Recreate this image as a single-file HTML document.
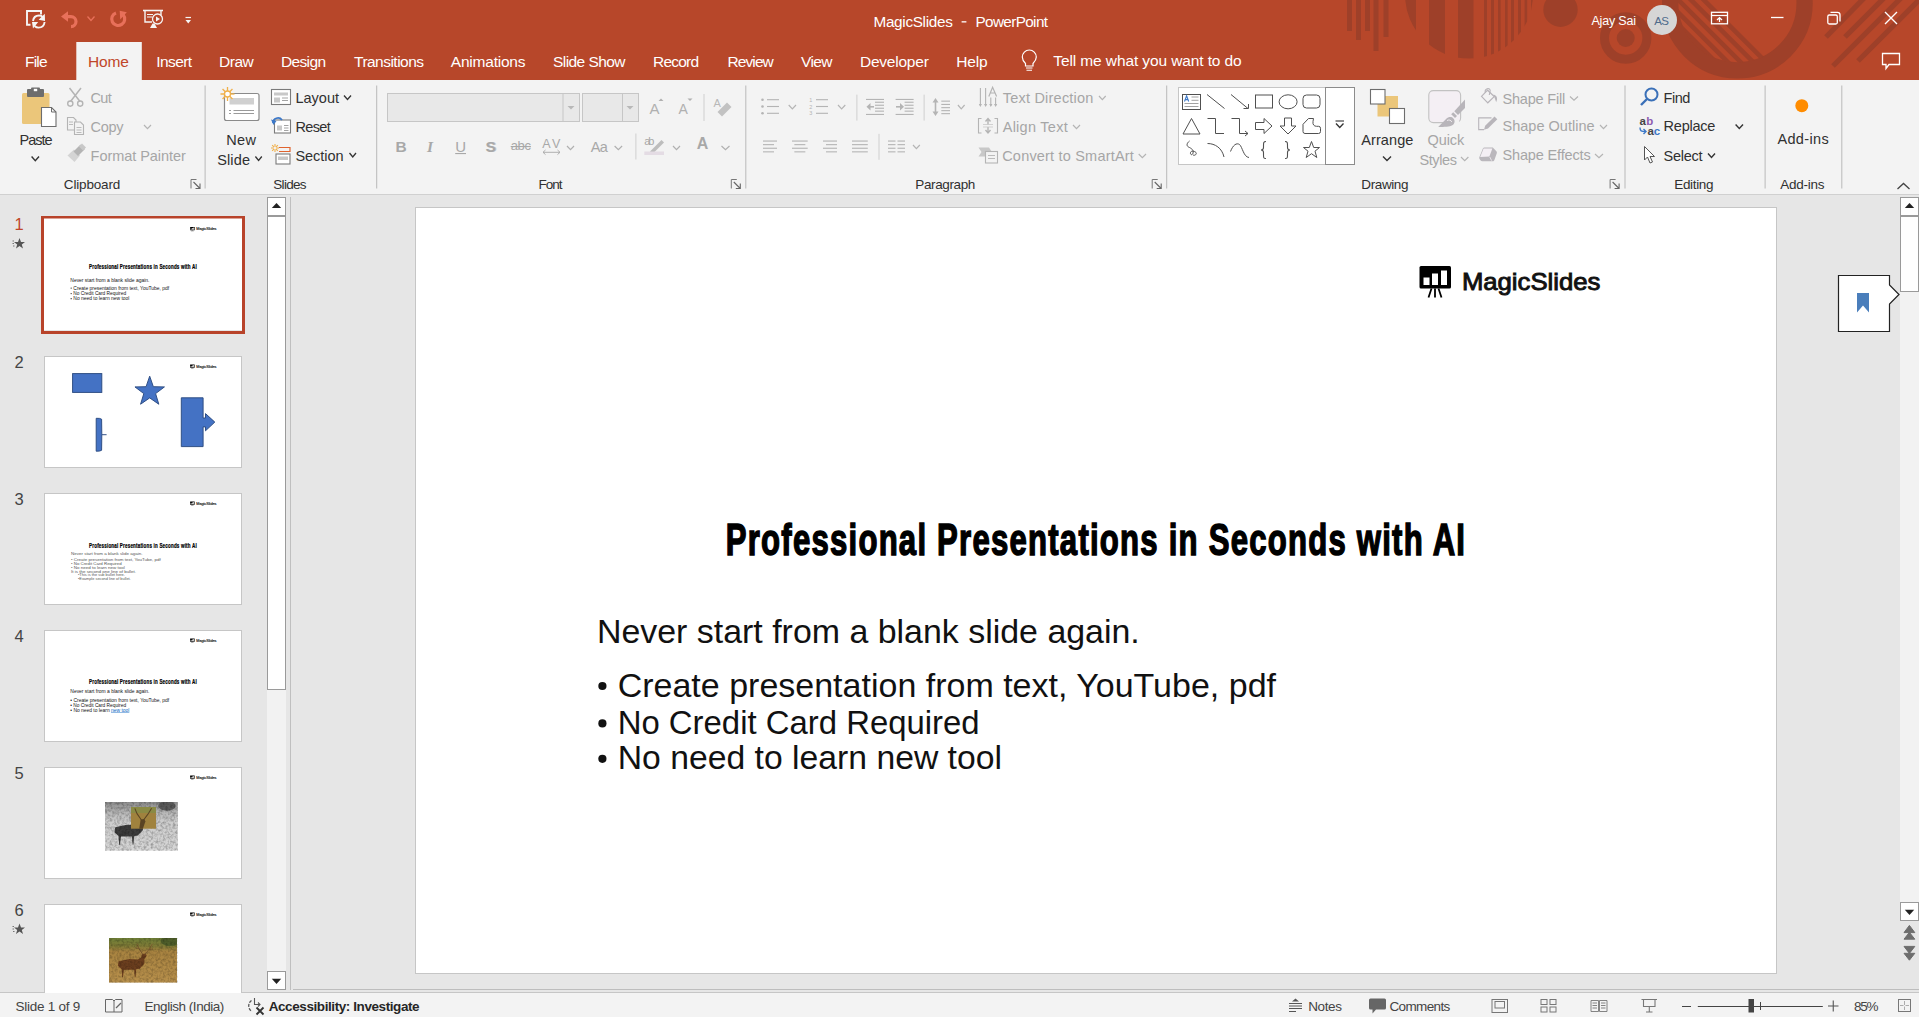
<!DOCTYPE html>
<html><head><meta charset="utf-8"><title>MagicSlides - PowerPoint</title>
<style>html,body{margin:0;padding:0;width:1919px;height:1017px;overflow:hidden;background:#E6E6E6;font-family:"Liberation Sans",sans-serif}svg{display:block}</style>
</head><body><svg width="1919" height="1017" viewBox="0 0 1919 1017" font-family="'Liberation Sans', sans-serif"><rect x="0" y="0" width="1919" height="80" fill="#B7472A"/>
<rect x="1347" y="0" width="5" height="31" fill="#9E4029"/>
<rect x="1356" y="0" width="5" height="40" fill="#9E4029"/>
<rect x="1365" y="0" width="5" height="31" fill="#9E4029"/>
<rect x="1373.5" y="0" width="5" height="51" fill="#9E4029"/>
<rect x="1383.5" y="0" width="5" height="37" fill="#9E4029"/>
<clipPath id="c1"><circle cx="1469" cy="-5.5" r="64"/></clipPath>
<g clip-path="url(#c1)" fill="#9E4029">
<rect x="1400" y="0" width="16" height="80" fill="#9E4029"/>
<rect x="1429" y="0" width="16" height="80" fill="#9E4029"/>
<rect x="1458" y="0" width="15.5" height="80" fill="#9E4029"/>
<rect x="1484" y="0" width="3" height="80" fill="#9E4029"/>
<rect x="1491" y="0" width="3" height="80" fill="#9E4029"/>
<rect x="1498" y="0" width="2.6" height="80" fill="#9E4029"/>
<rect x="1505" y="0" width="2.6" height="80" fill="#9E4029"/>
<rect x="1511" y="0" width="3" height="80" fill="#9E4029"/>
<rect x="1518" y="0" width="3" height="80" fill="#9E4029"/>
<rect x="1524.6" y="0" width="2.6" height="80" fill="#9E4029"/>
<rect x="1531" y="0" width="2.6" height="80" fill="#9E4029"/>
</g>
<circle cx="1560.5" cy="9.7" r="17.2" fill="#9E4029"/>
<circle cx="1625.7" cy="38" r="21.2" fill="none" stroke="#9E4029" stroke-width="9"/>
<circle cx="1625.7" cy="38" r="9" fill="#9E4029"/>
<circle cx="1737.4" cy="3.1" r="67.2" fill="none" stroke="#9E4029" stroke-width="16.3"/>
<clipPath id="c2"><circle cx="1737.4" cy="3.1" r="59.5"/></clipPath>
<g clip-path="url(#c2)" stroke="#9E4029" stroke-width="4.6">
<line x1="1597.1" y1="-56.6" x2="1797.1" y2="143.4"/>
<line x1="1603.1" y1="-62.6" x2="1803.1" y2="137.4"/>
<line x1="1609.5" y1="-69.0" x2="1809.5" y2="131.0"/>
<line x1="1615.8" y1="-75.3" x2="1815.8" y2="124.7"/>
<line x1="1622.2" y1="-81.7" x2="1822.2" y2="118.3"/>
</g>
<g stroke="#9E4029" stroke-width="5.2">
<line x1="1826" y1="37" x2="1872" y2="-10"/>
<line x1="1845" y1="37" x2="1892" y2="-10"/>
<line x1="1833" y1="66" x2="1909" y2="-10"/>
<line x1="1858" y1="61" x2="1929" y2="-10"/>
</g>
<path d="M41 14.5V11H27V24.8H30.5" fill="none" stroke="#F5F5F5" stroke-width="1.9"/>
<path d="M33 21C33.5 17.5 36 15.5 39 15.5C40.6 15.5 42 16.1 43 17.2" fill="none" stroke="#F5F5F5" stroke-width="1.9"/>
<path d="M44.8 13.8L45 21L38.6 19.8Z" fill="#F5F5F5"/>
<path d="M44.6 22C44.2 25.6 41.7 27.6 38.6 27.6C37 27.6 35.6 27 34.6 26" fill="none" stroke="#F5F5F5" stroke-width="1.9"/>
<path d="M32 22H38.2L33 28.6Z" fill="#F5F5F5"/>
<path d="M66.5 16.6H71A5 5 0 0 1 71 26.6H71.8" fill="none" stroke="#E8705A" stroke-width="3.2"/>
<path d="M61 16.5L68 11.3V21.7Z" fill="#E8705A"/>
<path d="M87.5 16.5L91.0 20.5L94.5 16.5" fill="none" stroke="#E8705A" stroke-width="1.3"/>
<path d="M115.98 12.89A6.5 6.5 0 1 0 123.18 14.82" fill="none" stroke="#E8705A" stroke-width="3.2"/>
<path d="M119.7 10.8L126.8 12.2L120.2 19.4Z" fill="#E8705A"/>
<path d="M143 10.5H163" fill="none" stroke="#F5F5F5" stroke-width="1.6"/>
<path d="M145 11V22H152M161 11V15" fill="none" stroke="#F5F5F5" stroke-width="1.4"/>
<path d="M147 14.5H153M147 17H152" fill="none" stroke="#F5F5F5" stroke-width="1.1"/>
<circle cx="157.5" cy="19" r="5" fill="none" stroke="#F5F5F5" stroke-width="1.3"/>
<path d="M156 16.5L160 19L156 21.5Z" fill="#F5F5F5"/>
<path d="M150 28L152.5 23.5H154.5L157 28Z" fill="#F5F5F5"/>
<path d="M185.5 17.5H191" fill="none" stroke="#F5F5F5" stroke-width="1.2"/>
<path d="M185.5 20H191L188.25 23.5Z" fill="#F5F5F5"/>
<text x="873.5" y="26.9" font-size="15.3" fill="#FFFFFF" textLength="79.3" lengthAdjust="spacing">MagicSlides</text>
<rect x="961.6" y="21.2" width="4.8" height="1.3" fill="#FFFFFF"/>
<text x="975.5" y="26.9" font-size="15.3" fill="#FFFFFF" textLength="72.5" lengthAdjust="spacing">PowerPoint</text>
<text x="1591.4" y="24.9" font-size="12.5" fill="#FFFFFF" textLength="44.6" lengthAdjust="spacing">Ajay Sai</text>
<circle cx="1662" cy="20" r="15" fill="#D6D6D6"/>
<text x="1654.3" y="24.9" font-size="11.5" fill="#4E6A8A" textLength="14.6" lengthAdjust="spacing">AS</text>
<rect x="1711.5" y="12.3" width="16" height="11.5" fill="none" stroke="#FFFFFF" stroke-width="1.3"/>
<path d="M1711.5 15.5H1727.5" fill="none" stroke="#fff" stroke-width="1.2"/>
<path d="M1719.5 22V17.5M1717 20L1719.5 17.5L1722 20" fill="none" stroke="#fff" stroke-width="1.2"/>
<path d="M1771 17.5H1783.5" fill="none" stroke="#fff" stroke-width="1.3"/>
<rect x="1827.8" y="15" width="9.5" height="9" fill="none" stroke="#FFFFFF" stroke-width="1.3" rx="1.5"/>
<path d="M1830.5 12.3H1837.5A2.5 2.5 0 0 1 1840 14.8V21.5" fill="none" stroke="#fff" stroke-width="1.3"/>
<path d="M1885 12L1897 24M1897 12L1885 24" fill="none" stroke="#fff" stroke-width="1.4"/>
<path d="M1882.5 53.5H1899.5V64.5H1889L1886 68.5V64.5H1882.5Z" fill="none" stroke="#fff" stroke-width="1.3"/>
<rect x="76.3" y="42" width="65.5" height="38" fill="#F3F3F3"/>
<text x="25" y="66.8" font-size="15.5" fill="#FFFFFF" textLength="22.5" lengthAdjust="spacing">File</text>
<text x="156.3" y="66.8" font-size="15.5" fill="#FFFFFF" textLength="35.7" lengthAdjust="spacing">Insert</text>
<text x="219" y="66.8" font-size="15.5" fill="#FFFFFF" textLength="34.8" lengthAdjust="spacing">Draw</text>
<text x="281" y="66.8" font-size="15.5" fill="#FFFFFF" textLength="45" lengthAdjust="spacing">Design</text>
<text x="354" y="66.8" font-size="15.5" fill="#FFFFFF" textLength="70" lengthAdjust="spacing">Transitions</text>
<text x="450.8" y="66.8" font-size="15.5" fill="#FFFFFF" textLength="74.7" lengthAdjust="spacing">Animations</text>
<text x="553" y="66.8" font-size="15.5" fill="#FFFFFF" textLength="72.5" lengthAdjust="spacing">Slide Show</text>
<text x="653" y="66.8" font-size="15.5" fill="#FFFFFF" textLength="46" lengthAdjust="spacing">Record</text>
<text x="727.5" y="66.8" font-size="15.5" fill="#FFFFFF" textLength="46.3" lengthAdjust="spacing">Review</text>
<text x="801" y="66.8" font-size="15.5" fill="#FFFFFF" textLength="31.5" lengthAdjust="spacing">View</text>
<text x="860" y="66.8" font-size="15.5" fill="#FFFFFF" textLength="68.8" lengthAdjust="spacing">Developer</text>
<text x="956.3" y="66.8" font-size="15.5" fill="#FFFFFF" textLength="31.2" lengthAdjust="spacing">Help</text>
<text x="88" y="66.8" font-size="15.5" fill="#C0462A" textLength="40.8" lengthAdjust="spacing">Home</text>
<path d="M1025.5 63.5C1023.5 61.5 1022.3 59.5 1022.3 57A7 7 0 0 1 1036.3 57C1036.3 59.5 1035 61.5 1033 63.5V66H1025.5Z" fill="none" stroke="#fff" stroke-width="1.2"/>
<path d="M1026 68H1032.5M1026.5 70.3H1032" fill="none" stroke="#fff" stroke-width="1.1"/>
<text x="1053.3" y="66.3" font-size="15.5" fill="#FFFFFF" textLength="188.4" lengthAdjust="spacing">Tell me what you want to do</text>
<rect x="0" y="80" width="1919" height="114" fill="#F3F3F3"/>
<rect x="0" y="194" width="1919" height="1" fill="#D0D0D0"/>
<rect x="204.6" y="85.5" width="1" height="103" fill="#B9B9B9"/>
<rect x="376.2" y="85.5" width="1" height="103" fill="#B9B9B9"/>
<rect x="745.3" y="85.5" width="1" height="103" fill="#B9B9B9"/>
<rect x="1166.2" y="85.5" width="1" height="103" fill="#B9B9B9"/>
<rect x="1624.5" y="85.5" width="1" height="103" fill="#B9B9B9"/>
<rect x="1764.6" y="85.5" width="1" height="103" fill="#B9B9B9"/>
<rect x="1841.3" y="85.5" width="1" height="103" fill="#B9B9B9"/>
<text x="63.8" y="188.9" font-size="13.5" fill="#303030" textLength="56.5" lengthAdjust="spacing">Clipboard</text>
<text x="273.3" y="188.9" font-size="13.5" fill="#303030" textLength="33.2" lengthAdjust="spacing">Slides</text>
<text x="538.4" y="188.9" font-size="13.5" fill="#303030" textLength="24.1" lengthAdjust="spacing">Font</text>
<text x="915.3" y="188.9" font-size="13.5" fill="#303030" textLength="60" lengthAdjust="spacing">Paragraph</text>
<text x="1361.3" y="188.9" font-size="13.5" fill="#303030" textLength="47.2" lengthAdjust="spacing">Drawing</text>
<text x="1674.2" y="188.9" font-size="13.5" fill="#303030" textLength="39.3" lengthAdjust="spacing">Editing</text>
<text x="1780.2" y="188.9" font-size="13.5" fill="#303030" textLength="44.2" lengthAdjust="spacing">Add-ins</text>
<path d="M191.0 188.5V179.5H196.5" fill="none" stroke="#777" stroke-width="1"/>
<path d="M193.5 182L199.5 188M200.0 183.5V188.5H195.5" fill="none" stroke="#666" stroke-width="1.1"/>
<path d="M731.3 188.5V179.5H736.8" fill="none" stroke="#777" stroke-width="1"/>
<path d="M733.8 182L739.8 188M740.3 183.5V188.5H735.8" fill="none" stroke="#666" stroke-width="1.1"/>
<path d="M1152.2 188.5V179.5H1157.7" fill="none" stroke="#777" stroke-width="1"/>
<path d="M1154.7 182L1160.7 188M1161.2 183.5V188.5H1156.7" fill="none" stroke="#666" stroke-width="1.1"/>
<path d="M1610.1 188.5V179.5H1615.6" fill="none" stroke="#777" stroke-width="1"/>
<path d="M1612.6 182L1618.6 188M1619.1 183.5V188.5H1614.6" fill="none" stroke="#666" stroke-width="1.1"/>
<path d="M1897.5 189L1903.5 183.5L1909.5 189" fill="none" stroke="#444" stroke-width="1.3"/>
<rect x="22" y="93" width="27.5" height="31" fill="#EBC67A" rx="1.5"/>
<rect x="27" y="89" width="17" height="8" fill="#6D6D6D" rx="1"/>
<rect x="31" y="87.5" width="9" height="4" fill="#6D6D6D" rx="1"/>
<rect x="33.8" y="88.8" width="3.4" height="2.4" fill="#FFFFFF"/>
<path d="M41.5 107.5H51.5L56 112V126.5H41.5Z" fill="#FFFFFF" stroke="#6D6D6D" stroke-width="1.1"/>
<path d="M51.5 107.5V112H56" fill="none" stroke="#6D6D6D" stroke-width="1"/>
<text x="19.5" y="144.7" font-size="14.5" fill="#303030" textLength="33.2" lengthAdjust="spacing">Paste</text>
<path d="M31.6 156.5L35.300000000000004 160.7L39.0 156.5" fill="none" stroke="#333" stroke-width="1.4"/>
<path d="M69.5 88L80 101.5M81 88L70.5 101.5" fill="none" stroke="#B4B4B4" stroke-width="1.5"/>
<circle cx="70.3" cy="103.6" r="2.6" fill="none" stroke="#B4B4B4" stroke-width="1.4"/>
<circle cx="80.2" cy="103.6" r="2.6" fill="none" stroke="#B4B4B4" stroke-width="1.4"/>
<text x="90.6" y="102.8" font-size="14.5" fill="#A6A6A6" textLength="21.1" lengthAdjust="spacing">Cut</text>
<path d="M67.5 117.5H73.5L76 120V130H67.5Z" fill="none" stroke="#B4B4B4" stroke-width="1.1"/>
<path d="M74.5 122H80.5L83.5 125V134.5H74.5Z" fill="#F3F3F3" stroke="#B4B4B4" stroke-width="1.1"/>
<path d="M69 122H73M69 124.5H73M76.5 127.5H81.5M76.5 130H81.5M76.5 132.5H81.5" fill="none" stroke="#B4B4B4" stroke-width="0.9"/>
<text x="90.6" y="132" font-size="14.5" fill="#A6A6A6" textLength="33" lengthAdjust="spacing">Copy</text>
<path d="M144 125L147.5 128.6L151 125" fill="none" stroke="#B4B4B4" stroke-width="1.2"/>
<path d="M67.5 155.5L74 149.5L80 155.5L74.5 162Z" fill="#D4D4D4"/>
<path d="M73.5 151.5L80.5 144.5L85 149L78 156Z" fill="#B4B4B4"/>
<path d="M79 146.5L82 143.5L86 147.5L83 150.5Z" fill="#C8C8C8"/>
<text x="90.6" y="160.7" font-size="14.5" fill="#A6A6A6" textLength="95.2" lengthAdjust="spacing">Format Painter</text>
<rect x="224.5" y="93.5" width="34.5" height="27" fill="#FFFFFF" stroke="#8A8A8A" stroke-width="1.2" rx="2"/>
<rect x="229.5" y="98" width="24.5" height="6.5" fill="#D0D0D0"/>
<path d="M229 110.5H231M233.5 110.5H254M229 113.5H231M233.5 113.5H254" fill="none" stroke="#9A9A9A" stroke-width="1.1"/>
<g stroke="#F0B04A" stroke-width="1.3"><line x1="234.5" y1="94.0" x2="230.0" y2="94.0"/><line x1="232.44975075195458" y1="98.9497441846549" x2="229.26776812569807" y2="95.76776578023389"/><line x1="227.50000928756427" y1="100.99999999999383" x2="227.50000331698723" y2="96.4999999999978"/><line x1="222.5502623826535" y1="98.94975731924555" x2="225.7322365652334" y2="95.76777047115912"/><line x1="220.50000000002464" y1="94.00001857512855" x2="225.0000000000088" y2="94.00000663397448"/><line x1="222.5502361134722" y1="89.0502689499706" x2="225.73222718338292" y2="92.23223891070378"/><line x1="227.49997213730717" y1="87.00000000005545" x2="227.49999004903827" y2="91.50000000001981"/><line x1="232.44972448270357" y1="89.05022954619865" x2="229.2677587438227" y2="92.23222483792809"/></g>
<circle cx="227.5" cy="94" r="3" fill="#FFFFFF" stroke="#F0B04A" stroke-width="1.3"/>
<text x="226.3" y="144.8" font-size="14.5" fill="#303030" textLength="29.7" lengthAdjust="spacing">New</text>
<text x="217.2" y="164.8" font-size="14.5" fill="#303030" textLength="32.8" lengthAdjust="spacing">Slide</text>
<path d="M255.4 156.5L258.6 160.5L261.8 156.5" fill="none" stroke="#333" stroke-width="1.3"/>
<rect x="271.5" y="89.5" width="19" height="15" fill="#FFFFFF" stroke="#7A7A7A" stroke-width="1.1"/>
<rect x="274" y="92.5" width="14" height="3" fill="#C8C8C8"/>
<rect x="274" y="97.5" width="6" height="5" fill="#C8C8C8"/>
<path d="M282 98H288M282 100.5H288" fill="none" stroke="#9A9A9A" stroke-width="0.9"/>
<text x="295.4" y="102.8" font-size="14.5" fill="#303030" textLength="43.6" lengthAdjust="spacing">Layout</text>
<path d="M344 95.5L347.5 99.5L351 95.5" fill="none" stroke="#333" stroke-width="1.3"/>
<rect x="274.5" y="120" width="16" height="13" fill="#FFFFFF" stroke="#7A7A7A" stroke-width="1.1"/>
<rect x="277" y="125.5" width="5" height="5" fill="#C8C8C8"/>
<path d="M284 125.5H288.5M284 128H288.5M284 130.5H288.5" fill="none" stroke="#9A9A9A" stroke-width="0.9"/>
<path d="M273 123A5 5 0 0 1 282 120" fill="none" stroke="#3C78C8" stroke-width="1.8"/>
<path d="M271 119.5L273.5 125L276.5 121Z" fill="#3C78C8"/>
<text x="295.4" y="131.9" font-size="14.5" fill="#303030" textLength="35.3" lengthAdjust="spacing">Reset</text>
<path d="M279 147.5H290V151.5H279" fill="none" stroke="#E0642F" stroke-width="1.2"/>
<rect x="276" y="154" width="14" height="10" fill="#FFFFFF" stroke="#7A7A7A" stroke-width="1.1"/>
<rect x="278" y="156.5" width="10" height="3.5" fill="#C8C8C8"/>
<g stroke="#F0B04A" stroke-width="1.1"><line x1="279.0" y1="148.0" x2="276.2" y2="148.0"/><line x1="277.8284290011169" y1="150.82842524837423" x2="275.84852870033507" y2="148.84852757451227"/><line x1="275.0000053071796" y1="151.99999999999648" x2="275.00000159215386" y2="149.19999999999894"/><line x1="272.17157850437343" y1="150.8284327538546" x2="274.15147355131205" y2="148.84852982615638"/><line x1="271.0000000000141" y1="148.00001061435918" x2="273.8000000000042" y2="148.00000318430776"/><line x1="272.1715634934127" y1="145.17158225712606" x2="274.1514690480238" y2="147.15147467713783"/><line x1="274.99998407846124" y1="144.0000000000317" x2="274.99999522353835" y2="146.8000000000095"/><line x1="277.8284139901163" y1="145.17155974068496" x2="275.8485241970349" y2="147.15146792220548"/></g>
<text x="295.4" y="160.8" font-size="14.5" fill="#303030" textLength="48.2" lengthAdjust="spacing">Section</text>
<path d="M349.5 153L352.75 157L356.0 153" fill="none" stroke="#333" stroke-width="1.3"/>
<rect x="387.5" y="93.5" width="192" height="28" fill="#E8E8E8" stroke="#C6C6C6" stroke-width="1"/>
<rect x="562.5" y="94" width="1" height="27" fill="#C6C6C6"/>
<path d="M567.5 106H574.5L571 109.5Z" fill="#B8B8B8"/>
<rect x="582.5" y="93.5" width="56" height="28" fill="#E8E8E8" stroke="#C6C6C6" stroke-width="1"/>
<rect x="622" y="94" width="1" height="27" fill="#C6C6C6"/>
<path d="M626.5 106H633.5L630 109.5Z" fill="#B8B8B8"/>
<text x="649.5" y="113.5" font-size="15" fill="#B0B0B0" textLength="11" lengthAdjust="spacing">A</text>
<path d="M658.5 101L661 98.5L663.5 101Z" fill="#B0B0B0"/>
<text x="678.5" y="113.5" font-size="14" fill="#B0B0B0" textLength="10" lengthAdjust="spacing">A</text>
<path d="M687.5 98.5L690 101L692.5 98.5Z" fill="#B0B0B0"/>
<rect x="703.5" y="94" width="1" height="27" fill="#D0D0D0"/>
<text x="713.5" y="107" font-size="11" fill="#B8B8B8" textLength="8" lengthAdjust="spacing">A</text>
<path d="M722 116.5L731.5 107L727 102.5L717.5 112Z" fill="#C2C2C2"/>
<text x="395.4" y="151.7" font-size="15.5" fill="#A8A8A8" font-weight="bold" textLength="10" lengthAdjust="spacing">B</text>
<text x="427" y="151.7" font-size="15.5" fill="#A8A8A8" font-weight="bold" font-family="'Liberation Serif', serif" font-style="italic">I</text>
<text x="455.2" y="151.7" font-size="15" fill="#A8A8A8" textLength="10.8" lengthAdjust="spacing">U</text>
<rect x="455.2" y="153" width="10.8" height="1.1" fill="#A8A8A8"/>
<text x="486.5" y="152.3" font-size="15.5" fill="#C8C8C8" font-weight="bold" textLength="10" lengthAdjust="spacing">S</text>
<text x="485.5" y="151.7" font-size="15.5" fill="#A8A8A8" font-weight="bold" textLength="10" lengthAdjust="spacing">S</text>
<text x="510.7" y="150" font-size="13" fill="#A8A8A8" textLength="20.2" lengthAdjust="spacing">abc</text>
<rect x="510.7" y="146" width="20.2" height="1.1" fill="#A8A8A8"/>
<text x="542.3" y="147.5" font-size="12.5" fill="#A8A8A8" textLength="18" lengthAdjust="spacing">AV</text>
<path d="M543 152.3H560M545.5 150L543 152.3L545.5 154.6M557.5 150L560 152.3L557.5 154.6" fill="none" stroke="#A8A8A8" stroke-width="0.9"/>
<path d="M567 146L570.5 149.6L574 146" fill="none" stroke="#B0B0B0" stroke-width="1.2"/>
<text x="590.8" y="151.5" font-size="14.5" fill="#A8A8A8" textLength="17" lengthAdjust="spacing">Aa</text>
<path d="M614.6 146L618.35 149.6L622.1 146" fill="none" stroke="#B0B0B0" stroke-width="1.2"/>
<rect x="635.4" y="133.5" width="1" height="26" fill="#D0D0D0"/>
<text x="644.3" y="145" font-size="11" fill="#A8A8A8" textLength="10" lengthAdjust="spacing">ab</text>
<path d="M650 151.5L661.5 140L664 142.5L652.5 154Z" fill="#BDBDBD"/>
<rect x="644.3" y="151.5" width="19.7" height="3.5" fill="#E4DCE4"/>
<path d="M673 146L676.5 149.6L680 146" fill="none" stroke="#B0B0B0" stroke-width="1.2"/>
<text x="696.8" y="149.3" font-size="16" fill="#A8A8A8" font-weight="bold" textLength="12" lengthAdjust="spacing">A</text>
<path d="M721.5 146L725.5 149.6L729.5 146" fill="none" stroke="#B0B0B0" stroke-width="1.2"/>
<circle cx="762.5" cy="99.7" r="1.3" fill="#B4B4B4"/>
<rect x="767.0" y="99.15" width="12" height="1.1" fill="#B4B4B4"/>
<circle cx="762.5" cy="106.5" r="1.3" fill="#B4B4B4"/>
<rect x="767.0" y="105.95" width="12" height="1.1" fill="#B4B4B4"/>
<circle cx="762.5" cy="113.3" r="1.3" fill="#B4B4B4"/>
<rect x="767.0" y="112.75" width="12" height="1.1" fill="#B4B4B4"/>
<path d="M788.7 105L792.35 108.8L796.0 105" fill="none" stroke="#B4B4B4" stroke-width="1.2"/>
<rect x="816" y="99.15" width="12" height="1.1" fill="#B4B4B4"/>
<rect x="816" y="105.95" width="12" height="1.1" fill="#B4B4B4"/>
<rect x="816" y="112.75" width="12" height="1.1" fill="#B4B4B4"/>
<text x="809.3" y="102" font-size="5.5" fill="#B4B4B4">1</text>
<text x="809.3" y="108.5" font-size="5.5" fill="#B4B4B4">2</text>
<text x="809.3" y="115" font-size="5.5" fill="#B4B4B4">3</text>
<path d="M838 105L841.65 108.8L845.3 105" fill="none" stroke="#B4B4B4" stroke-width="1.2"/>
<rect x="856.4" y="94.6" width="1" height="26" fill="#D0D0D0"/>
<rect x="866" y="98.9" width="18" height="1.1" fill="#B4B4B4"/>
<rect x="866" y="113.9" width="18" height="1.1" fill="#B4B4B4"/>
<rect x="875" y="101.7" width="9" height="1.1" fill="#B4B4B4"/>
<rect x="875" y="104.7" width="9" height="1.1" fill="#B4B4B4"/>
<rect x="875" y="107.7" width="9" height="1.1" fill="#B4B4B4"/>
<rect x="875" y="110.6" width="9" height="1.1" fill="#B4B4B4"/>
<rect x="895.6" y="98.9" width="18" height="1.1" fill="#B4B4B4"/>
<rect x="895.6" y="113.9" width="18" height="1.1" fill="#B4B4B4"/>
<rect x="904.6" y="101.7" width="9" height="1.1" fill="#B4B4B4"/>
<rect x="904.6" y="104.7" width="9" height="1.1" fill="#B4B4B4"/>
<rect x="904.6" y="107.7" width="9" height="1.1" fill="#B4B4B4"/>
<rect x="904.6" y="110.6" width="9" height="1.1" fill="#B4B4B4"/>
<path d="M866.5 106.8L870.5 103V110.6Z" fill="#B4B4B4"/>
<path d="M870 106.8H874" fill="none" stroke="#B4B4B4" stroke-width="1.6"/>
<path d="M904 106.8L900 103V110.6Z" fill="#B4B4B4"/>
<path d="M896 106.8H900.5" fill="none" stroke="#B4B4B4" stroke-width="1.6"/>
<rect x="923.6" y="94.6" width="1" height="26" fill="#D0D0D0"/>
<rect x="941.3" y="100.6" width="8.7" height="1.1" fill="#B4B4B4"/>
<rect x="941.3" y="103.9" width="8.7" height="1.1" fill="#B4B4B4"/>
<rect x="941.3" y="107.1" width="8.7" height="1.1" fill="#B4B4B4"/>
<rect x="941.3" y="110.1" width="8.7" height="1.1" fill="#B4B4B4"/>
<rect x="941.3" y="113.1" width="8.7" height="1.1" fill="#B4B4B4"/>
<path d="M935.5 100.5V113.5" fill="none" stroke="#B4B4B4" stroke-width="1.6"/>
<path d="M932.5 102.5L935.5 98L938.5 102.5ZM932.5 111.5L935.5 116L938.5 111.5Z" fill="#B4B4B4"/>
<path d="M957.9 105L961.25 108.8L964.6 105" fill="none" stroke="#B4B4B4" stroke-width="1.2"/>
<path d="M980.4 88V106M985.6 88V106M990.8 97.5V106M995.6 97.5V106" fill="none" stroke="#B4B4B4" stroke-width="1.1"/>
<path d="M978.8 104L980.4 107L982 104ZM984 104L985.6 107L987.2 104ZM989.2 104L990.8 107L992.4 104ZM994 104L995.6 107L997.2 104Z" fill="#B4B4B4"/>
<path d="M988.8 96.4L992.6 87.3L996.6 96.4M990.3 93H995" fill="none" stroke="#B4B4B4" stroke-width="1.2"/>
<text x="1002.7" y="102.9" font-size="14.5" fill="#A6A6A6" textLength="90.7" lengthAdjust="spacing">Text Direction</text>
<path d="M1099 96L1102.35 99.6L1105.7 96" fill="none" stroke="#B4B4B4" stroke-width="1.2"/>
<path d="M981.5 118.5H978.5V133H981.5M994.5 118.5H997.5V133H994.5" fill="none" stroke="#B4B4B4" stroke-width="1.1"/>
<path d="M988 119V124.5M985.5 121.5L988 118.5L990.5 121.5M988 127V132.5M985.5 130L988 133L990.5 130" fill="none" stroke="#B4B4B4" stroke-width="1.4"/>
<path d="M983 124.5H993M983 127H993" fill="none" stroke="#C8C8C8" stroke-width="0.8"/>
<text x="1002.7" y="132" font-size="14.5" fill="#A6A6A6" textLength="65" lengthAdjust="spacing">Align Text</text>
<path d="M1073 125L1076.5 128.6L1080 125" fill="none" stroke="#B4B4B4" stroke-width="1.2"/>
<path d="M978.5 147.5H989L992 152L989 156.5H978.5L981.5 152Z" fill="#C8C8C8"/>
<rect x="985.5" y="151.5" width="12" height="11.5" fill="#F3F3F3" stroke="#B4B4B4" stroke-width="1.1"/>
<path d="M988 155.5H995M988 158.5H995" fill="none" stroke="#B4B4B4" stroke-width="0.9"/>
<text x="1002.2" y="161.1" font-size="14.5" fill="#A6A6A6" textLength="131.6" lengthAdjust="spacing">Convert to SmartArt</text>
<path d="M1138.7 154L1142.3500000000001 157.6L1146.0 154" fill="none" stroke="#B4B4B4" stroke-width="1.2"/>
<rect x="763" y="140.5" width="14" height="1.1" fill="#B4B4B4"/>
<rect x="763" y="144.1" width="11" height="1.1" fill="#B4B4B4"/>
<rect x="763" y="147.7" width="14" height="1.1" fill="#B4B4B4"/>
<rect x="763" y="151.3" width="11" height="1.1" fill="#B4B4B4"/>
<rect x="792" y="140.5" width="15.7" height="1.1" fill="#B4B4B4"/>
<rect x="794.35" y="144.1" width="11" height="1.1" fill="#B4B4B4"/>
<rect x="792" y="147.7" width="15.7" height="1.1" fill="#B4B4B4"/>
<rect x="794.35" y="151.3" width="11" height="1.1" fill="#B4B4B4"/>
<rect x="823" y="140.5" width="14" height="1.1" fill="#B4B4B4"/>
<rect x="826" y="144.1" width="11" height="1.1" fill="#B4B4B4"/>
<rect x="823" y="147.7" width="14" height="1.1" fill="#B4B4B4"/>
<rect x="826" y="151.3" width="11" height="1.1" fill="#B4B4B4"/>
<rect x="852" y="140.5" width="15.8" height="1.1" fill="#B4B4B4"/>
<rect x="852" y="144.1" width="15.8" height="1.1" fill="#B4B4B4"/>
<rect x="852" y="147.7" width="15.8" height="1.1" fill="#B4B4B4"/>
<rect x="852" y="151.3" width="15.8" height="1.1" fill="#B4B4B4"/>
<rect x="878.5" y="133.8" width="1" height="26" fill="#D0D0D0"/>
<rect x="888" y="140.5" width="7.5" height="1.1" fill="#B4B4B4"/>
<rect x="888" y="144.1" width="7.5" height="1.1" fill="#B4B4B4"/>
<rect x="888" y="147.7" width="7.5" height="1.1" fill="#B4B4B4"/>
<rect x="888" y="151.3" width="7.5" height="1.1" fill="#B4B4B4"/>
<rect x="897.5" y="140.5" width="7.5" height="1.1" fill="#B4B4B4"/>
<rect x="897.5" y="144.1" width="7.5" height="1.1" fill="#B4B4B4"/>
<rect x="897.5" y="147.7" width="7.5" height="1.1" fill="#B4B4B4"/>
<rect x="897.5" y="151.3" width="7.5" height="1.1" fill="#B4B4B4"/>
<path d="M913 145L916.4 148.6L919.8 145" fill="none" stroke="#B4B4B4" stroke-width="1.2"/>
<rect x="1178.5" y="87.5" width="176" height="77" fill="#FFFFFF" stroke="#C6C6C6" stroke-width="1"/>
<rect x="1325.5" y="87.5" width="29" height="77" fill="none" stroke="#8C8C8C" stroke-width="1"/>
<path d="M1335.5 121H1344" fill="none" stroke="#333" stroke-width="1.1"/>
<path d="M1336 123.5L1339.75 127.5L1343.5 123.5" fill="none" stroke="#333" stroke-width="1.3"/>
<rect x="1182.5" y="94.5" width="18" height="15" fill="#FFFFFF" stroke="#505050" stroke-width="1"/>
<path d="M1184.5 101.5L1186.6 95.8L1188.7 101.5M1185.3 99.6H1187.9" fill="none" stroke="#3C78C8" stroke-width="1.1"/>
<path d="M1191.5 97H1198.5M1191.5 100.3H1198.5M1184.5 103.5H1198.5M1184.5 106.5H1198.5" fill="none" stroke="#8A8A8A" stroke-width="0.8"/>
<path d="M1207 94.5L1224.5 108.5" fill="none" stroke="#505050" stroke-width="1"/>
<path d="M1231 94.5L1248 108.5M1243.5 108.5H1248.5V104" fill="none" stroke="#505050" stroke-width="1"/>
<rect x="1255.5" y="95" width="17" height="13" fill="none" stroke="#505050" stroke-width="1"/>
<ellipse cx="1288.1" cy="101.8" rx="9" ry="7" fill="none" stroke="#505050" stroke-width="1"/>
<rect x="1303" y="95" width="17" height="13" fill="none" stroke="#505050" stroke-width="1" rx="3.5"/>
<path d="M1183 134H1200L1191.5 118.5Z" fill="none" stroke="#505050" stroke-width="1"/>
<path d="M1207.5 118.5H1215.5V133.5H1224" fill="none" stroke="#505050" stroke-width="1"/>
<path d="M1231.5 118.5H1239.5V133.5H1248M1245 131L1248 133.5L1245 136" fill="none" stroke="#505050" stroke-width="1"/>
<path d="M1255.5 122.5H1264V118.5L1272 126L1264 133.5V129.5H1255.5Z" fill="none" stroke="#505050" stroke-width="1"/>
<path d="M1284.5 118H1291.5V126H1296L1288 134L1280 126H1284.5Z" fill="none" stroke="#505050" stroke-width="1"/>
<path d="M1305 133.5H1318.5A2 2 0 0 0 1320.5 131.5V128.3A2 2 0 0 0 1318.5 126.3H1316.5C1314 126.3 1312.5 124.5 1313 121.5L1313.5 118.5H1308.5L1303 124.3V131.5A2 2 0 0 0 1305 133.5Z" fill="none" stroke="#505050" stroke-width="1"/>
<path d="M1189.5 141C1187 143 1186 145.5 1188.5 147C1191.5 148.5 1194 150 1193 153C1192.5 155.5 1190 155 1190.5 152.5C1191 150.5 1194.5 151 1196 152.5C1197 154 1195 156 1193 155" fill="none" stroke="#505050" stroke-width="1"/>
<path d="M1207.5 143.5C1215 143.5 1222 148 1224 157" fill="none" stroke="#505050" stroke-width="1"/>
<path d="M1230.5 151.5C1233 145 1236.5 142.5 1239.5 144.5C1242.5 147 1243.5 157 1249 157.5" fill="none" stroke="#505050" stroke-width="1"/>
<path d="M1266 141.5C1263.5 141.5 1263.5 143 1263.5 145.5V147.5C1263.5 149 1262.5 150 1261 150C1262.5 150 1263.5 151 1263.5 152.5V155C1263.5 157.5 1263.5 158.5 1266 158.5" fill="none" stroke="#505050" stroke-width="1.1"/>
<path d="M1285 141.5C1287.5 141.5 1287.5 143 1287.5 145.5V147.5C1287.5 149 1288.5 150 1290 150C1288.5 150 1287.5 151 1287.5 152.5V155C1287.5 157.5 1287.5 158.5 1285 158.5" fill="none" stroke="#505050" stroke-width="1.1"/>
<path d="M1311.5 141.5L1313.7 147.5H1319.5L1315 151.2L1316.8 157.5L1311.5 153.7L1306.2 157.5L1308 151.2L1303.5 147.5H1309.3Z" fill="none" stroke="#505050" stroke-width="1"/>
<rect x="1377.5" y="96" width="20.5" height="20.5" fill="#EBC67A"/>
<rect x="1370.5" y="89.5" width="14.5" height="14.5" fill="#FFFFFF" stroke="#6D6D6D" stroke-width="1.1"/>
<rect x="1389.5" y="108.5" width="15" height="15" fill="#FFFFFF" stroke="#6D6D6D" stroke-width="1.1"/>
<text x="1361.3" y="145" font-size="14.5" fill="#303030" textLength="52.1" lengthAdjust="spacing">Arrange</text>
<path d="M1383 156.5L1387.0 160.5L1391 156.5" fill="none" stroke="#333" stroke-width="1.4"/>
<rect x="1428.8" y="90.6" width="31.8" height="32" fill="#F4EFF4" stroke="#C2C2C2" stroke-width="1.1" rx="4.5"/>
<path d="M1456 119L1462 123.5L1438 128Z" fill="#F3F3F3"/>
<path d="M1465 99.5V108L1458 115L1454.3 111.3Z" fill="#B8B5BA"/>
<path d="M1453.2 112.3L1457 116.1L1455 118.1L1451.2 114.3Z" fill="#B8B5BA"/>
<path d="M1438.2 127L1446.3 118.7C1448.3 116.7 1451.6 116.4 1453.4 118.4C1455.4 120.6 1454.8 123.6 1452.3 125.3C1449.8 127 1444.5 127 1438.2 127Z" fill="#B8B5BA"/>
<path d="M1447 120.5C1449 119.5 1451 120 1451.8 122" fill="none" stroke="#F4EFF4" stroke-width="0.9"/>
<text x="1427.4" y="145" font-size="14.5" fill="#A6A6A6" textLength="36.9" lengthAdjust="spacing">Quick</text>
<text x="1419.4" y="164.8" font-size="14.5" fill="#A6A6A6" textLength="37.6" lengthAdjust="spacing">Styles</text>
<path d="M1461 157L1464.7 160.6L1468.4 157" fill="none" stroke="#B4B4B4" stroke-width="1.2"/>
<path d="M1481.5 96.3L1487.6 90.2L1494.2 96.6L1487.8 102.8Z" fill="none" stroke="#B8B5BA" stroke-width="1.2"/>
<path d="M1485.2 92.5C1484.5 88.5 1489.5 87.2 1490.2 90.5L1489.3 95" fill="none" stroke="#B8B5BA" stroke-width="1.1"/>
<path d="M1493.5 94.5C1496 95 1497.3 97 1497 99.5L1496.2 102.2L1494.6 97.8Z" fill="#B8B5BA"/>
<text x="1502.5" y="103.5" font-size="14.5" fill="#A6A6A6" textLength="62.8" lengthAdjust="spacing">Shape Fill</text>
<path d="M1570 96.5L1574.0 100.1L1578 96.5" fill="none" stroke="#B4B4B4" stroke-width="1.2"/>
<path d="M1484 129.6H1478.7V117.9H1491.5" fill="none" stroke="#B8B5BA" stroke-width="1.1"/>
<path d="M1484 129.8L1485.2 125.7L1494.5 116.4L1497.3 119.2L1488 128.5Z" fill="#B8B5BA"/>
<text x="1502.5" y="131.4" font-size="14.5" fill="#A6A6A6" textLength="92.1" lengthAdjust="spacing">Shape Outline</text>
<path d="M1600 125L1603.5 128.6L1607 125" fill="none" stroke="#B4B4B4" stroke-width="1.2"/>
<path d="M1479.2 157.5L1483 148.2C1483.3 147.6 1483.8 147.4 1484.3 147.4H1492.8L1496.6 151.6C1497 152.2 1497 152.8 1496.8 153.3L1494.4 160C1494.1 160.8 1493.5 161.3 1492.7 161.3H1482.3C1481.6 161.3 1481 161 1480.6 160.5L1479.4 158.8Z" fill="#BAB7BC"/>
<path d="M1480.2 157L1483.6 148.4H1492.4L1489.4 156.6Z" fill="#F4EFF4"/>
<path d="M1489.8 157L1491.6 160.6" fill="none" stroke="#F4EFF4" stroke-width="0.8"/>
<text x="1502.5" y="160.4" font-size="14.5" fill="#A6A6A6" textLength="88.2" lengthAdjust="spacing">Shape Effects</text>
<path d="M1595 154L1599.0 157.6L1603 154" fill="none" stroke="#B4B4B4" stroke-width="1.2"/>
<circle cx="1651.5" cy="94.5" r="6" fill="none" stroke="#3A70B8" stroke-width="2"/>
<path d="M1647 99L1641 105" fill="none" stroke="#3A70B8" stroke-width="2.4"/>
<text x="1663.6" y="103" font-size="14.5" fill="#303030" textLength="26.8" lengthAdjust="spacing">Find</text>
<text x="1639.5" y="124.5" font-size="11.5" fill="#444" font-weight="bold">a</text>
<rect x="1652.3" y="116" width="0" height="0" fill="none"/>
<text x="1646.2" y="124.5" font-size="11.5" fill="#8E5CB0" font-weight="bold">b</text>
<text x="1647.5" y="135" font-size="11.5" fill="#444" font-weight="bold">a</text>
<text x="1653.8" y="135" font-size="11.5" fill="#3C78C8" font-weight="bold">c</text>
<path d="M1640 127.5C1640 131 1641 131.5 1646 131.5M1643.5 129L1646 131.5L1643.5 134" fill="none" stroke="#3C78C8" stroke-width="1.4"/>
<text x="1663.6" y="131.4" font-size="14.5" fill="#303030" textLength="51.8" lengthAdjust="spacing">Replace</text>
<path d="M1735.6 124.5L1739.3 128.5L1743.0 124.5" fill="none" stroke="#333" stroke-width="1.4"/>
<path d="M1644.5 146.5V160L1647.5 157L1650 163L1652.5 162L1650 156.5H1654.5Z" fill="#FFFFFF" stroke="#555" stroke-width="1"/>
<text x="1663.6" y="160.7" font-size="14.5" fill="#303030" textLength="39" lengthAdjust="spacing">Select</text>
<path d="M1708 153.5L1711.5 157.5L1715 153.5" fill="none" stroke="#333" stroke-width="1.4"/>
<circle cx="1801.8" cy="105.7" r="6.5" fill="#FF8C00"/>
<text x="1777.4" y="144.2" font-size="14.5" fill="#303030" textLength="51.4" lengthAdjust="spacing">Add-ins</text>
<rect x="0" y="195" width="1919" height="797" fill="#E6E6E6"/>
<rect x="267" y="197" width="19" height="793" fill="#F2F2F2"/>
<rect x="267.5" y="197.5" width="18" height="18" fill="#FFFFFF" stroke="#9A9A9A" stroke-width="1"/>
<path d="M271.8 208H281.2L276.5 203Z" fill="#222"/>
<rect x="267.5" y="216.5" width="18" height="473" fill="#FFFFFF" stroke="#9A9A9A" stroke-width="1"/>
<rect x="267.5" y="971.5" width="18" height="18" fill="#FFFFFF" stroke="#9A9A9A" stroke-width="1"/>
<path d="M271.8 978.8H281.2L276.5 984Z" fill="#222"/>
<rect x="290" y="197" width="1" height="793" fill="#BFBFBF"/>
<rect x="1900" y="197" width="19" height="792" fill="#F2F2F2"/>
<rect x="1900.5" y="197.5" width="18" height="18" fill="#FFFFFF" stroke="#9A9A9A" stroke-width="1"/>
<path d="M1904.8 208H1914.2L1909.5 203Z" fill="#222"/>
<rect x="1900.5" y="216.5" width="18" height="75" fill="#FFFFFF" stroke="#9A9A9A" stroke-width="1"/>
<rect x="1900.5" y="902.5" width="18" height="18" fill="#FFFFFF" stroke="#9A9A9A" stroke-width="1"/>
<path d="M1904.8 909.8H1914.2L1909.5 915Z" fill="#222"/>
<rect x="1900" y="921" width="19" height="68" fill="#E6E6E6"/>
<path d="M1909.4 925.4L1914.8 932.6H1904Z M1909.4 932.3L1914.8 939.2H1904Z" fill="#6D6D6D" stroke="#6D6D6D" stroke-width="1" stroke-linejoin="round"/>
<path d="M1904 946.4H1914.8L1909.4 953.4Z M1904 953.3H1914.8L1909.4 960.2Z" fill="#6D6D6D" stroke="#6D6D6D" stroke-width="1" stroke-linejoin="round"/>
<rect x="293" y="989" width="1626" height="1" fill="#BDBDBD"/>
<rect x="0" y="992" width="1919" height="1" fill="#C6C6C6"/>
<rect x="415.5" y="207.5" width="1361" height="766" fill="#FFFFFF" stroke="#C6C6C6" stroke-width="1"/>
<g><rect x="1419.5" y="266" width="31.5" height="22.5" rx="1.5" fill="#000"/><rect x="1423.5" y="277.5" width="6" height="7.5" fill="#fff"/><rect x="1432" y="273.5" width="6" height="11.5" fill="#fff"/><rect x="1441" y="270.5" width="6" height="14.5" fill="#fff"/><path d="M1431.5 288.5L1428.5 297.5M1435 288.5V297.5M1438.5 288.5L1441.5 297.5" stroke="#000" stroke-width="1.8" fill="none"/><text x="1461.9" y="290.1" font-size="24" fill="#111" stroke="#111" stroke-width="0.9" textLength="138.5" lengthAdjust="spacingAndGlyphs">MagicSlides</text><text transform="scale(0.7,1)" x="1036.86" y="555.4" font-size="44.5" font-weight="bold" fill="#000" stroke="#000" stroke-width="1.5" textLength="1056.00" lengthAdjust="spacing">Professional Presentations in Seconds with AI</text><text x="596.9" y="642.9" font-size="33.5" fill="#111" textLength="542.9" lengthAdjust="spacingAndGlyphs">Never start from a blank slide again.</text><text x="617.7" y="696.6" font-size="33.5" fill="#111" textLength="658.3" lengthAdjust="spacingAndGlyphs">Create presentation from text, YouTube, pdf</text><text x="617.7" y="734" font-size="33.5" fill="#111" textLength="361.9" lengthAdjust="spacingAndGlyphs">No Credit Card Required</text><text x="617.7" y="769.4" font-size="33.5" fill="#111" textLength="384.3" lengthAdjust="spacingAndGlyphs">No need to learn new tool</text><circle cx="602.4" cy="686.0" r="4.1" fill="#111"/><circle cx="602.4" cy="723.4" r="4.1" fill="#111"/><circle cx="602.4" cy="758.8" r="4.1" fill="#111"/></g>
<rect x="42.5" y="217.5" width="201" height="115" fill="none" stroke="#B8432A" stroke-width="3"/>
<rect x="44" y="218.5" width="198" height="111.5" fill="#FFFFFF"/>
<g transform="translate(44,218.5) scale(0.14559) translate(-416,-208)"><rect x="1419.5" y="266" width="31.5" height="22.5" rx="1.5" fill="#000"/><rect x="1423.5" y="277.5" width="6" height="7.5" fill="#fff"/><rect x="1432" y="273.5" width="6" height="11.5" fill="#fff"/><rect x="1441" y="270.5" width="6" height="14.5" fill="#fff"/><path d="M1431.5 288.5L1428.5 297.5M1435 288.5V297.5M1438.5 288.5L1441.5 297.5" stroke="#000" stroke-width="1.8" fill="none"/><text x="1461.9" y="290.1" font-size="24" fill="#111" stroke="#111" stroke-width="0.9" textLength="138.5" lengthAdjust="spacingAndGlyphs">MagicSlides</text><text transform="scale(0.7,1)" x="1036.86" y="555.4" font-size="44.5" font-weight="bold" fill="#000" stroke="#000" stroke-width="1.5" textLength="1056.00" lengthAdjust="spacing">Professional Presentations in Seconds with AI</text><text x="596.9" y="642.9" font-size="33.5" fill="#111" textLength="542.9" lengthAdjust="spacingAndGlyphs">Never start from a blank slide again.</text><text x="617.7" y="696.6" font-size="33.5" fill="#111" textLength="658.3" lengthAdjust="spacingAndGlyphs">Create presentation from text, YouTube, pdf</text><text x="617.7" y="734" font-size="33.5" fill="#111" textLength="361.9" lengthAdjust="spacingAndGlyphs">No Credit Card Required</text><text x="617.7" y="769.4" font-size="33.5" fill="#111" textLength="384.3" lengthAdjust="spacingAndGlyphs">No need to learn new tool</text><circle cx="602.4" cy="686.0" r="4.1" fill="#111"/><circle cx="602.4" cy="723.4" r="4.1" fill="#111"/><circle cx="602.4" cy="758.8" r="4.1" fill="#111"/></g>
<rect x="44.5" y="356.5" width="197" height="111" fill="#FFFFFF" stroke="#C6C6C6" stroke-width="1"/>
<rect x="45" y="357" width="196" height="109.5" fill="#FFFFFF"/>
<g transform="translate(44,356) scale(0.14559) translate(-416,-208)"><rect x="1419.5" y="266" width="31.5" height="22.5" rx="1.5" fill="#000"/><rect x="1423.5" y="277.5" width="6" height="7.5" fill="#fff"/><rect x="1432" y="273.5" width="6" height="11.5" fill="#fff"/><rect x="1441" y="270.5" width="6" height="14.5" fill="#fff"/><path d="M1431.5 288.5L1428.5 297.5M1435 288.5V297.5M1438.5 288.5L1441.5 297.5" stroke="#000" stroke-width="1.8" fill="none"/><text x="1461.9" y="290.1" font-size="24" fill="#111" stroke="#111" stroke-width="0.9" textLength="138.5" lengthAdjust="spacingAndGlyphs">MagicSlides</text><rect x="612.4444444444443" y="328.888888888889" width="200.56565656565655" height="129.13131313131314" fill="#4472C4" stroke="#2A4A80" stroke-width="6.5" stroke-linejoin="miter"/><polygon points="1142.0,346.7 1167.1,418.8 1243.3,420.3 1182.5,466.4 1204.6,539.3 1142.0,495.8 1079.4,539.3 1101.5,466.4 1040.8,420.3 1117.0,418.8" fill="#4472C4" stroke="#2A4A80" stroke-width="6.5" stroke-linejoin="miter"/><path d="M774.5454545454545 635.9191919191919Q800.6464646464647 633.8585858585859 811.6363636363635 642.1010101010099L813.0101010101009 748.5656565656565L811.6363636363635 855.7171717171717Q800.6464646464647 863.272727272727 774.5454545454545 861.8989898989897Z" fill="#4472C4" stroke="#2A4A80" stroke-width="6.5" stroke-linejoin="miter"/><path d="M813.0101010101009 748.5656565656565H845.9797979797979" stroke="#2A4A80" stroke-width="6.5" stroke-linejoin="miter"/><path d="M1359.0707070707072 495.11111111111114H1508.8080808080806V633.8585858585859H1525.292929292929V603.6363636363637L1589.171717171717 662.0202020202021L1525.292929292929 721.7777777777778V694.9898989898988H1508.8080808080806V830.3030303030304H1359.0707070707072Z" fill="#4472C4" stroke="#2A4A80" stroke-width="6.5" stroke-linejoin="miter"/></g>
<rect x="44.5" y="493.5" width="197" height="111" fill="#FFFFFF" stroke="#C6C6C6" stroke-width="1"/>
<rect x="45" y="494" width="196" height="109.5" fill="#FFFFFF"/>
<g transform="translate(44,493) scale(0.14559) translate(-416,-208)"><rect x="1419.5" y="266" width="31.5" height="22.5" rx="1.5" fill="#000"/><rect x="1423.5" y="277.5" width="6" height="7.5" fill="#fff"/><rect x="1432" y="273.5" width="6" height="11.5" fill="#fff"/><rect x="1441" y="270.5" width="6" height="14.5" fill="#fff"/><path d="M1431.5 288.5L1428.5 297.5M1435 288.5V297.5M1438.5 288.5L1441.5 297.5" stroke="#000" stroke-width="1.8" fill="none"/><text x="1461.9" y="290.1" font-size="24" fill="#111" stroke="#111" stroke-width="0.9" textLength="138.5" lengthAdjust="spacingAndGlyphs">MagicSlides</text><g transform="translate(0,30)"><text transform="scale(0.7,1)" x="1036.86" y="555.4" font-size="44.5" font-weight="bold" fill="#000" stroke="#000" stroke-width="1.5" textLength="1056.00" lengthAdjust="spacing">Professional Presentations in Seconds with AI</text></g><text x="601.5" y="633.2" font-size="30" fill="#555" textLength="491" lengthAdjust="spacingAndGlyphs">Never start from a blank slide again.</text><text x="601.5" y="674.4" font-size="30" fill="#555" textLength="617" lengthAdjust="spacingAndGlyphs">• Create presentation from text, YouTube, pdf</text><text x="601.5" y="701.2" font-size="30" fill="#555" textLength="348" lengthAdjust="spacingAndGlyphs">• No Credit Card Required</text><text x="601.5" y="729.3" font-size="30" fill="#555" textLength="369" lengthAdjust="spacingAndGlyphs">• No need to learn new tool</text><text x="601.5" y="756.1" font-size="30" fill="#555" textLength="447" lengthAdjust="spacingAndGlyphs">It is the second one line of bullet.</text><text x="649.5" y="776" font-size="30" fill="#555" textLength="322" lengthAdjust="spacingAndGlyphs">•This is the sub bullet here.</text><text x="649.5" y="802.8" font-size="30" fill="#555" textLength="362" lengthAdjust="spacingAndGlyphs">•Example second line of bullet.</text></g>
<rect x="44.5" y="630.5" width="197" height="111" fill="#FFFFFF" stroke="#C6C6C6" stroke-width="1"/>
<rect x="45" y="631" width="196" height="109.5" fill="#FFFFFF"/>
<g transform="translate(44,630) scale(0.14559) translate(-416,-208)"><rect x="1419.5" y="266" width="31.5" height="22.5" rx="1.5" fill="#000"/><rect x="1423.5" y="277.5" width="6" height="7.5" fill="#fff"/><rect x="1432" y="273.5" width="6" height="11.5" fill="#fff"/><rect x="1441" y="270.5" width="6" height="14.5" fill="#fff"/><path d="M1431.5 288.5L1428.5 297.5M1435 288.5V297.5M1438.5 288.5L1441.5 297.5" stroke="#000" stroke-width="1.8" fill="none"/><text x="1461.9" y="290.1" font-size="24" fill="#111" stroke="#111" stroke-width="0.9" textLength="138.5" lengthAdjust="spacingAndGlyphs">MagicSlides</text><g transform="translate(0,25)"><text transform="scale(0.7,1)" x="1036.86" y="555.4" font-size="44.5" font-weight="bold" fill="#000" stroke="#000" stroke-width="1.5" textLength="1056.00" lengthAdjust="spacing">Professional Presentations in Seconds with AI</text></g><text x="596.9" y="640" font-size="33.5" fill="#111" textLength="542.9" lengthAdjust="spacingAndGlyphs">Never start from a blank slide again.</text><text x="597" y="700" font-size="33.5" fill="#111" textLength="679" lengthAdjust="spacingAndGlyphs">• Create presentation from text, YouTube, pdf</text><text x="597" y="735" font-size="33.5" fill="#111" textLength="382.6" lengthAdjust="spacingAndGlyphs">• No Credit Card Required</text><text x="597" y="770" font-size="33.5" fill="#111" textLength="405" lengthAdjust="spacingAndGlyphs">• No need to learn <tspan fill="#0563C1">new tool</tspan></text><rect x="876" y="774" width="126" height="3" fill="#0563C1"/></g>
<defs><linearGradient id="gg" x1="0" y1="0" x2="0" y2="1"><stop offset="0" stop-color="#8a8a8a"/><stop offset="0.2" stop-color="#b4b4b4"/><stop offset="0.4" stop-color="#cdcdcd"/><stop offset="1" stop-color="#d6d6d6"/></linearGradient><filter id="nz" x="0" y="0" width="100%" height="100%"><feTurbulence type="fractalNoise" baseFrequency="0.06" numOctaves="2" seed="3"/><feColorMatrix type="matrix" values="0 0 0 0 0  0 0 0 0 0  0 0 0 0 0  0 0 0 -1.6 1.0"/></filter><linearGradient id="og" x1="0" y1="0" x2="0" y2="1"><stop offset="0" stop-color="#6F8038"/><stop offset="0.18" stop-color="#7E7A36"/><stop offset="0.3" stop-color="#A88340"/><stop offset="1" stop-color="#B8904C"/></linearGradient></defs>
<rect x="44.5" y="767.5" width="197" height="111" fill="#FFFFFF" stroke="#C6C6C6" stroke-width="1"/>
<rect x="45" y="768" width="196" height="109.5" fill="#FFFFFF"/>
<g transform="translate(44,767) scale(0.14559) translate(-416,-208)"><rect x="1419.5" y="266" width="31.5" height="22.5" rx="1.5" fill="#000"/><rect x="1423.5" y="277.5" width="6" height="7.5" fill="#fff"/><rect x="1432" y="273.5" width="6" height="11.5" fill="#fff"/><rect x="1441" y="270.5" width="6" height="14.5" fill="#fff"/><path d="M1431.5 288.5L1428.5 297.5M1435 288.5V297.5M1438.5 288.5L1441.5 297.5" stroke="#000" stroke-width="1.8" fill="none"/><text x="1461.9" y="290.1" font-size="24" fill="#111" stroke="#111" stroke-width="0.9" textLength="138.5" lengthAdjust="spacingAndGlyphs">MagicSlides</text><rect x="834.989898989899" y="448.4040404040404" width="500.040404040404" height="333.8181818181818" fill="url(#gg)"/><clipPath id="cp5"><rect x="834.989898989899" y="448.4040404040404" width="500.040404040404" height="333.8181818181818"/></clipPath><g clip-path="url(#cp5)"><ellipse cx="1260.0242424242424" cy="475.10949494949494" rx="60.00484848484847" ry="33.38181818181818" fill="#5a5a5a"/></g><path d="M905.00 621.99L985.00 605.30L1045.01 608.64L1070.01 595.28L1080.01 568.58L1105.01 565.24L1112.51 581.93L1095.01 605.30L1095.01 642.02L1060.01 678.74L1035.01 682.08L1030.01 742.16L1025.01 742.16L1020.00 685.41L945.00 685.41L937.50 742.16L932.50 742.16L927.50 682.08L900.00 655.37Z" fill="#3C3C3C"/><path d="M1085.01 571.92L1055.01 528.52L1040.01 491.80M1055.01 528.52L1030.01 521.84M1100.01 571.92L1130.01 531.86L1155.02 491.80M1130.01 531.86L1157.52 531.86" fill="none" stroke="#555" stroke-width="7.00"/><rect x="834.989898989899" y="448.4040404040404" width="500.040404040404" height="333.8181818181818" fill="#000" filter="url(#nz)" opacity="0.35"/><rect x="1013.5757575757575" y="482.7474747474747" width="171.7171717171717" height="149.05050505050502" fill="#A0823E"/><rect x="1013.5757575757575" y="482.7474747474747" width="171.7171717171717" height="41.21212121212121" fill="#8A8A44"/><path d="M1070.0088888888888 632.0040404040404L1080.009696969697 568.5785858585858L1105.011717171717 565.2404040404041L1112.512323232323 581.9313131313131L1095.010909090909 632.0040404040404Z" fill="#5A4424"/><path d="M1085.010101010101 571.9167676767677L1055.0076767676767 528.5204040404041L1040.0064646464646 491.80040404040403M1100.011313131313 571.9167676767677L1130.0137373737373 531.8585858585859L1155.0157575757576 491.80040404040403" fill="none" stroke="#5A4424" stroke-width="7.000565656565656"/></g>
<rect x="44.5" y="904.5" width="197" height="111" fill="#FFFFFF" stroke="#C6C6C6" stroke-width="1"/>
<rect x="45" y="905" width="196" height="109.5" fill="#FFFFFF"/>
<g transform="translate(44,904) scale(0.14559) translate(-416,-208)"><rect x="1419.5" y="266" width="31.5" height="22.5" rx="1.5" fill="#000"/><rect x="1423.5" y="277.5" width="6" height="7.5" fill="#fff"/><rect x="1432" y="273.5" width="6" height="11.5" fill="#fff"/><rect x="1441" y="270.5" width="6" height="14.5" fill="#fff"/><path d="M1431.5 288.5L1428.5 297.5M1435 288.5V297.5M1438.5 288.5L1441.5 297.5" stroke="#000" stroke-width="1.8" fill="none"/><text x="1461.9" y="290.1" font-size="24" fill="#111" stroke="#111" stroke-width="0.9" textLength="138.5" lengthAdjust="spacingAndGlyphs">MagicSlides</text><rect x="862.4646464646464" y="441.5353535353535" width="467.07070707070704" height="306.34343434343435" fill="url(#og)"/><clipPath id="cp6"><rect x="862.4646464646464" y="441.5353535353535" width="467.07070707070704" height="306.34343434343435"/></clipPath><g clip-path="url(#cp6)"><ellipse cx="1282.8282828282827" cy="459.9159595959596" rx="65.389898989899" ry="36.76121212121212" fill="#4E5E2A"/></g><path d="M927.85 600.83L1002.59 585.52L1058.63 588.58L1081.99 576.33L1091.33 551.82L1114.68 548.76L1121.69 564.07L1105.34 585.52L1105.34 619.21L1072.65 652.91L1049.29 655.98L1044.62 711.12L1039.95 711.12L1035.28 659.04L965.22 659.04L958.21 711.12L953.54 711.12L948.87 655.98L923.18 631.47Z" fill="#6B3E1E"/><path d="M1096.00 554.88L1067.98 515.06L1053.96 481.36M1067.98 515.06L1044.62 508.93M1110.01 554.88L1138.04 518.12L1161.39 481.36M1138.04 518.12L1163.73 518.12" fill="none" stroke="#7A5A30" stroke-width="6.54"/><rect x="862.4646464646464" y="441.5353535353535" width="467.07070707070704" height="306.34343434343435" fill="#000" filter="url(#nz)" opacity="0.3"/></g>
<text x="14.5" y="230" font-size="16.5" fill="#C0462A" textLength="10" lengthAdjust="spacing">1</text>
<text x="14.5" y="368" font-size="16.5" fill="#444" textLength="10" lengthAdjust="spacing">2</text>
<text x="14.5" y="505" font-size="16.5" fill="#444" textLength="10" lengthAdjust="spacing">3</text>
<text x="14.5" y="642" font-size="16.5" fill="#444" textLength="10" lengthAdjust="spacing">4</text>
<text x="14.5" y="779" font-size="16.5" fill="#444" textLength="10" lengthAdjust="spacing">5</text>
<text x="14.5" y="916" font-size="16.5" fill="#444" textLength="10" lengthAdjust="spacing">6</text>
<path d="M19.5 238.0L21 242.0H25L21.8 244.5L23 248.5L19.5 246.0L16 248.5L17.2 244.5L14 242.0H18Z" fill="#555"/>
<rect x="12.5" y="240.5" width="1.5" height="1" fill="#777"/>
<rect x="12.5" y="243.0" width="1.5" height="1" fill="#777"/>
<rect x="13" y="245.5" width="1.5" height="1" fill="#777"/>
<path d="M19.5 923.5L21 927.5H25L21.8 930L23 934L19.5 931.5L16 934L17.2 930L14 927.5H18Z" fill="#555"/>
<rect x="12.5" y="926" width="1.5" height="1" fill="#777"/>
<rect x="12.5" y="928.5" width="1.5" height="1" fill="#777"/>
<rect x="13" y="931" width="1.5" height="1" fill="#777"/>
<path d="M1838.5 275.5H1889.5V285L1899 294.5L1889.5 304V331.5H1838.5Z" fill="#FFFFFF" stroke="#222" stroke-width="1.2"/>
<path d="M1857 293H1869V312.5L1863 305.5L1857 312.5Z" fill="#4A7EBB"/>
<rect x="0" y="993" width="1919" height="24" fill="#F3F3F3"/>
<text x="15.6" y="1010.7" font-size="13.5" fill="#444444" textLength="64.7" lengthAdjust="spacing">Slide 1 of 9</text>
<path d="M105.5 999.5H112.5L114 1001V1012H105.5Z M114 1001L115.5 999.5H122V1012H114" fill="none" stroke="#666" stroke-width="1"/>
<path d="M116 1008L121 1003" fill="none" stroke="#666" stroke-width="1.2"/>
<text x="144.5" y="1010.7" font-size="13.5" fill="#444444" textLength="79.8" lengthAdjust="spacing">English (India)</text>
<path d="M251.5 1000.5A6.5 6.5 0 0 0 252 1011.5" fill="none" stroke="#555" stroke-width="1.3" stroke-dasharray="3 1.3"/>
<path d="M254.5 998V1004.5H260M258 1002.5L260 1004.5L258 1006.5" fill="none" stroke="#555" stroke-width="1.1"/>
<path d="M256.5 1007.5L263.5 1014.5M263.5 1007.5L256.5 1014.5" fill="none" stroke="#333" stroke-width="1.8"/>
<text x="268.7" y="1010.7" font-size="13.5" fill="#262626" font-weight="bold" textLength="150.9" lengthAdjust="spacing">Accessibility: Investigate</text>
<path d="M1289 1003.5H1302M1289 1006H1302M1289 1008.5H1302M1289 1011.5H1296" fill="none" stroke="#555" stroke-width="1"/>
<path d="M1292 1001.5L1295.5 998.5L1299 1001.5Z" fill="#555"/>
<text x="1308.2" y="1011.4" font-size="13.5" fill="#444444" textLength="33.8" lengthAdjust="spacing">Notes</text>
<path d="M1370.5 998.5H1384.5A1.5 1.5 0 0 1 1386 1000V1008A1.5 1.5 0 0 1 1384.5 1009.5H1376L1372.5 1013.5V1009.5H1370.5A1.5 1.5 0 0 1 1369 1008V1000A1.5 1.5 0 0 1 1370.5 998.5Z" fill="#666"/>
<text x="1389.4" y="1011.4" font-size="13.5" fill="#444444" textLength="60.9" lengthAdjust="spacing">Comments</text>
<rect x="1492" y="999.5" width="15.5" height="13" fill="none" stroke="#777" stroke-width="1"/>
<rect x="1495" y="1001.5" width="9.5" height="6.5" fill="none" stroke="#777" stroke-width="1"/>
<rect x="1541" y="999.5" width="6" height="5" fill="none" stroke="#777" stroke-width="1"/>
<rect x="1550" y="999.5" width="6" height="5" fill="none" stroke="#777" stroke-width="1"/>
<rect x="1541" y="1007" width="6" height="5" fill="none" stroke="#777" stroke-width="1"/>
<rect x="1550" y="1007" width="6" height="5" fill="none" stroke="#777" stroke-width="1"/>
<path d="M1591 1000.5H1598.5V1011.5H1591ZM1599.5 1000.5H1607V1011.5H1599.5Z M1592.5 1003H1597M1592.5 1005.5H1597M1592.5 1008H1597M1601 1003H1605.5M1601 1005.5H1605.5M1601 1008H1605.5" fill="none" stroke="#777" stroke-width="0.9"/>
<path d="M1641.5 999.5H1657M1643.5 999.5V1006.5H1655V999.5M1649.3 1006.5V1012M1646 1012H1652.5" fill="none" stroke="#777" stroke-width="1.1"/>
<rect x="1682" y="1006" width="9" height="1" fill="#444"/>
<rect x="1697.8" y="1006" width="125" height="1" fill="#444"/>
<rect x="1748.5" y="999" width="5.5" height="13.5" fill="#444"/>
<rect x="1760" y="1002" width="1" height="8" fill="#444"/>
<path d="M1828 1006H1838.5M1833.25 1000.5V1011.5" fill="none" stroke="#555" stroke-width="1.1"/>
<text x="1854" y="1011.4" font-size="13.5" fill="#444444" textLength="24.5" lengthAdjust="spacing">85%</text>
<rect x="1898.5" y="999.5" width="12" height="12" fill="none" stroke="#777" stroke-width="1"/>
<path d="M1904.5 1001V1005M1904.5 1006.5V1010M1900 1005.5H1903.5M1905.5 1005.5H1909" fill="none" stroke="#999" stroke-width="0.8"/></svg></body></html>
